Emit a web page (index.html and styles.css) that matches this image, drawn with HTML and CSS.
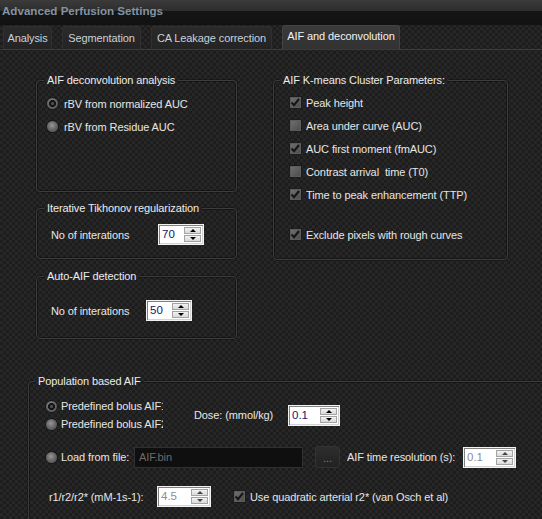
FILE: index.html
```html
<!DOCTYPE html>
<html>
<head>
<meta charset="utf-8">
<title>Advanced Perfusion Settings</title>
<link rel="stylesheet" href="styles.css">
</head>
<body>
<div class="titlebar"><span class="title">Advanced Perfusion Settings</span></div>
<div class="tabs">
  <div class="tab t1">Analysis</div>
  <div class="tab t2">Segmentation</div>
  <div class="tab t3">CA Leakage correction</div>
  <div class="tab t4 active">AIF and deconvolution</div>
</div>
<div class="pane">
  <div class="top">
    <div class="col-left">
      <div class="group g1">
        <div class="legend">AIF deconvolution analysis</div>
        <div class="rows rows-g1">
          <div class="opt"><span class="rb on"></span><span>rBV from normalized AUC</span></div>
          <div class="opt"><span class="rb"></span><span>rBV from Residue AUC</span></div>
        </div>
      </div>
      <div class="group g3">
        <div class="legend">Iterative Tikhonov regularization</div>
        <div class="field field-g3">
          <span class="lbl lbl-a">No of interations</span>
          <div class="spin"><span class="val">70</span><span class="btns"><span class="sb up"></span><span class="sb dn"></span></span></div>
        </div>
      </div>
      <div class="group g4">
        <div class="legend">Auto-AIF detection</div>
        <div class="field field-g4">
          <span class="lbl lbl-b">No of interations</span>
          <div class="spin"><span class="val">50</span><span class="btns"><span class="sb up"></span><span class="sb dn"></span></span></div>
        </div>
      </div>
    </div>
    <div class="group g2">
      <div class="legend">AIF K-means Cluster Parameters:</div>
      <div class="rows rows-g2">
        <div class="chk"><span class="cb"><svg viewBox="0 0 13 13" width="13" height="13"><path d="M2.5 6.5 L5 9.2 L10 3" fill="none" stroke="#151515" stroke-width="2"/></svg></span><span>Peak height</span></div>
        <div class="chk"><span class="cb"></span><span>Area under curve (AUC)</span></div>
        <div class="chk"><span class="cb"><svg viewBox="0 0 13 13" width="13" height="13"><path d="M2.5 6.5 L5 9.2 L10 3" fill="none" stroke="#151515" stroke-width="2"/></svg></span><span>AUC first moment (fmAUC)</span></div>
        <div class="chk"><span class="cb"></span><span>Contrast arrival&nbsp; time (T0)</span></div>
        <div class="chk"><span class="cb"><svg viewBox="0 0 13 13" width="13" height="13"><path d="M2.5 6.5 L5 9.2 L10 3" fill="none" stroke="#151515" stroke-width="2"/></svg></span><span>Time to peak enhancement (TTP)</span></div>
        <div class="chk chk-sep"><span class="cb"><svg viewBox="0 0 13 13" width="13" height="13"><path d="M2.5 6.5 L5 9.2 L10 3" fill="none" stroke="#151515" stroke-width="2"/></svg></span><span>Exclude pixels with rough curves</span></div>
      </div>
    </div>
  </div>
  <div class="group g5">
    <div class="legend">Population based AIF</div>
    <div class="prow prow-a">
      <div class="radios">
        <div class="opt2"><span class="rb on"></span><span class="clip">Predefined bolus AIF1</span></div>
        <div class="opt2"><span class="rb"></span><span class="clip">Predefined bolus AIF2</span></div>
      </div>
      <span class="lbl lbl-dose">Dose: (mmol/kg)</span>
      <div class="spin w52"><span class="val">0.1</span><span class="btns"><span class="sb up"></span><span class="sb dn"></span></span></div>
    </div>
    <div class="prow prow-b">
      <span class="rb"></span>
      <span class="lbl lbl-load">Load from file:</span>
      <span class="file">AIF.bin</span>
      <span class="dots">...</span>
      <span class="lbl lbl-res">AIF time resolution (s):</span>
      <div class="spin dis w53"><span class="val">0.1</span><span class="btns"><span class="sb up"></span><span class="sb dn"></span></span></div>
    </div>
    <div class="prow prow-c">
      <span class="lbl lbl-r">r1/r2/r2* (mM-1s-1):</span>
      <div class="spin dis w54"><span class="val">4.5</span><span class="btns"><span class="sb up"></span><span class="sb dn"></span></span></div>
      <span class="cb cb-q"><svg viewBox="0 0 13 13" width="13" height="13"><path d="M2.5 6.5 L5 9.2 L10 3" fill="none" stroke="#151515" stroke-width="2"/></svg></span>
      <span>Use quadratic arterial r2* (van Osch et al)</span>
    </div>
  </div>
</div>
</body>
</html>
```
FILE: styles.css
```css
html, body {
  margin: 0;
  padding: 0;
}
body, .legend {
  background-color: #1d1d1d;
  background-image:
    linear-gradient(45deg, #272727 25%, transparent 25%, transparent 75%, #272727 75%),
    linear-gradient(45deg, #272727 25%, transparent 25%, transparent 75%, #272727 75%);
  background-size: 6px 6px;
  background-position: 0 0, 3px 3px;
  background-attachment: fixed;
}
body {
  width: 542px;
  height: 519px;
  overflow: hidden;
  font-family: "Liberation Sans", Arial, sans-serif;
  font-size: 11px;
  letter-spacing: -0.1px;
  color: #e6e6e6;
}
.titlebar {
  height: 25px;
  box-sizing: border-box;
  padding: 4px 0 0 2px;
  background: linear-gradient(to bottom, #3b3b3b 0, #2d2d2d 11px, #151515 11px, #121212 25px);
}
.title {
  font-weight: bold;
  font-size: 11.6px;
  letter-spacing: 0;
  line-height: 14px;
  color: #8393a1;
}
.tabs {
  display: flex;
  align-items: flex-end;
  gap: 10px;
  height: 24px;
  padding-left: 3px;
}
.tab {
  height: 23px;
  box-sizing: border-box;
  border: 1px solid #303030;
  border-bottom: none;
  border-radius: 3px 3px 0 0;
  background: linear-gradient(to bottom, #2a2a2a, #242424);
  color: #c9d1d9;
  text-align: center;
  line-height: 22px;
}
.t1 { width: 49px; }
.t2 { width: 79px; }
.t3 { width: 121px; }
.t4 { width: 118px; }
.tab.active {
  height: 24px;
  line-height: 21px;
  background: linear-gradient(to bottom, #3a3a3a, #323232);
  border-color: #444;
  color: #f2f2f2;
}
.pane {
  border-top: 1px solid #3b3b3b;
}
.top {
  display: flex;
  align-items: flex-start;
  gap: 36px;
  margin: 30px 0 0 36px;
}
.col-left {
  display: flex;
  flex-direction: column;
}
.group {
  box-sizing: border-box;
  border: 1px solid #3c3c3c;
  border-radius: 4px;
  box-shadow: inset 0 0 0 1px rgba(0,0,0,0.35), 0 0 0 1px rgba(0,0,0,0.25);
}
.legend {
  width: fit-content;
  height: 13px;
  line-height: 13px;
  margin: -7px 0 0 7px;
  padding: 0 3px;
  color: #ececec;
  white-space: nowrap;
}
.g1 { width: 201px; height: 112px; }
.g3 { width: 201px; height: 51px; margin-top: 16px; }
.g4 { width: 201px; height: 63px; margin-top: 17px; }
.g2 { width: 235px; height: 180px; }
.g2 .legend { margin-left: 6px; }
.rows { display: flex; flex-direction: column; }
.rows-g1 { margin-top: 5px; padding-left: 10px; }
.rows-g2 { margin-top: 4px; padding-left: 15px; }
.opt, .chk {
  display: flex;
  align-items: center;
  height: 23px;
  white-space: nowrap;
}
.opt { gap: 6px; }
.chk { gap: 4px; }
.chk-sep { margin-top: 17px; }
.rb {
  flex: none;
  width: 11px;
  height: 11px;
  border-radius: 50%;
  background: radial-gradient(circle at 45% 40%, #979797 0, #6a6a6a 45%, #454545 100%);
  box-shadow: 0 0 0 1px #1a1a1a;
}
.rb.on {
  background:
    radial-gradient(circle at 50% 50%, #4c4c4c 0 1.2px, #141414 2px 3.2px, rgba(20,20,20,0) 3.8px),
    radial-gradient(circle at 45% 40%, #979797 0, #6a6a6a 45%, #454545 100%);
}
.cb {
  flex: none;
  width: 13px;
  height: 13px;
  box-sizing: border-box;
  border: 1px solid #1c1c1c;
  background: linear-gradient(135deg, #727272, #4a4a4a);
  box-shadow: inset 0 0 0 1px #5c5c5c;
  display: flex;
  align-items: center;
  justify-content: center;
}
.cb svg { display: block; margin: -1px; }
.field {
  display: flex;
  align-items: center;
  padding-left: 14px;
}
.field-g3 { margin-top: 9px; }
.field-g4 { margin-top: 17px; }
.lbl { white-space: nowrap; flex: none; }
.lbl-a { width: 107px; }
.lbl-b { width: 95px; }
.spin {
  flex: none;
  display: flex;
  width: 46px;
  height: 21px;
  box-sizing: border-box;
  background: #fff;
  border: 1px solid #f2f2f2;
  box-shadow: inset 1px 1px 0 #808080, inset -1px -1px 0 #d4d4d4;
  padding: 2px 2px 2px 3px;
}
.w52 { width: 52px; }
.w53 { width: 53px; }
.w54 { width: 54px; }
.spin .val {
  flex: 1;
  color: #15156e;
  font-size: 11.5px;
  line-height: 15px;
  letter-spacing: 0;
}
.spin.dis .val { color: #8c8c9a; }
.btns {
  display: flex;
  flex-direction: column;
  width: 17px;
  gap: 1px;
}
.sb {
  flex: 1;
  box-sizing: border-box;
  background: linear-gradient(to bottom, #f2f2f2, #d9d9d9);
  border: 1px solid #a3a3a3;
  display: flex;
  align-items: center;
  justify-content: center;
}
.up::before, .dn::before {
  content: "";
  width: 0;
  height: 0;
  border-left: 3px solid transparent;
  border-right: 3px solid transparent;
}
.up::before { border-bottom: 3px solid #000; }
.dn::before { border-top: 3px solid #000; }
.spin.dis .up::before { border-bottom-color: #444; }
.spin.dis .dn::before { border-top-color: #444; }
.g5 {
  width: 514px;
  height: 138px;
  margin: 42px 0 0 28px;
  border-right: none;
  border-bottom: none;
  border-radius: 4px 0 0 0;
  box-shadow: inset 1px 1px 0 rgba(0,0,0,0.35), -1px -1px 0 rgba(0,0,0,0.25);
}
.g5 .legend { margin-left: 6px; }
.prow {
  display: flex;
  align-items: center;
  padding-left: 17px;
  white-space: nowrap;
}
.prow-a { margin-top: 9px; }
.radios { display: flex; flex-direction: column; }
.opt2 {
  display: flex;
  align-items: center;
  gap: 4px;
  height: 18px;
}
.clip {
  width: 102px;
  overflow: hidden;
}
.lbl-dose { width: 94px; margin-left: 31px; }
.prow-b { margin-top: 13px; }
.lbl-load { width: 73px; margin-left: 4px; }
.file {
  flex: none;
  width: 169px;
  height: 21px;
  box-sizing: border-box;
  background: #0f0f0f;
  border: 1px solid #303030;
  color: #6c6c6c;
  padding-left: 4px;
  line-height: 19px;
}
.dots {
  flex: none;
  width: 25px;
  height: 22px;
  box-sizing: border-box;
  margin-left: 12px;
  border-radius: 3px;
  background: linear-gradient(to bottom, #2d2d2d, #222);
  border: 1px solid #333;
  color: #7c7c7c;
  text-align: center;
  line-height: 22px;
}
.lbl-res { width: 116px; margin-left: 7px; }
.prow-c { margin-top: 18px; }
.lbl-r { width: 108px; margin-left: 3px; }
.cb-q { margin-left: 22px; margin-right: 4px; }
```
